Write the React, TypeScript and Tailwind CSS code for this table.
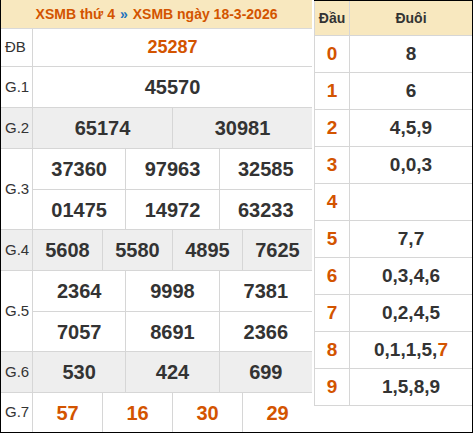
const rows: { label: string; cells: string[][]; gray?: boolean; red?: boolean; h: string; small?: boolean }[] = [
  { label: 'ĐB', cells: [['25287']], h: 'h-[37px]', red: true, small: true },
  { label: 'G.1', cells: [['45570']], h: 'h-[40px]' },
  { label: 'G.2', cells: [['65174', '30981']], h: 'h-[40px]', gray: true },
  { label: 'G.3', cells: [['37360', '97963', '32585'], ['01475', '14972', '63233']], h: 'h-[40px]' },
  { label: 'G.4', cells: [['5608', '5580', '4895', '7625']], h: 'h-[40px]', gray: true },
  { label: 'G.5', cells: [['2364', '9998', '7381'], ['7057', '8691', '2366']], h: 'h-[40px]' },
  { label: 'G.6', cells: [['530', '424', '699']], h: 'h-[40px]', gray: true },
  { label: 'G.7', cells: [['57', '16', '30', '29']], h: 'h-[39px]', red: true },
];

const loto: [string, React.ReactNode][] = [
  ['0', '8'],
  ['1', '6'],
  ['2', '4,5,9'],
  ['3', '0,0,3'],
  ['4', ''],
  ['5', '7,7'],
  ['6', '0,3,4,6'],
  ['7', '0,2,4,5'],
  ['8', <>0,1,1,5,<span className="text-[#d35400]">7</span></>],
  ['9', '1,5,8,9'],
];

export default function App() {
  return (
    <div
      className="flex h-[433px] w-[473px] border-x border-b border-black bg-white text-[#333]"
      style={{ fontFamily: '"Liberation Sans", Arial, sans-serif' }}
    >
      <div className="flex w-[311px] flex-col">
        <div className="flex h-[36px] items-center justify-center border-b border-[#d9d9d9] bg-[#f8e8bf] text-[14px] font-bold text-[#d35400]">
          XSMB thứ 4 <span className="mx-[5px] text-[#1e73be]">»</span> XSMB ngày 18-3-2026
        </div>
        {rows.map((r) => (
          <div key={r.label} className={`flex border-b border-[#d6d6d6] last:border-b-0 ${r.gray ? 'bg-[#eeeeee]' : ''}`}>
            <div className="flex w-[32px] shrink-0 items-center border-r border-[#d6d6d6] pl-[4px] text-[15px]">
              {r.label}
            </div>
            <div className="flex flex-1 flex-col">
              {r.cells.map((line, i) => (
                <div key={i} className={`flex ${r.h} ${i > 0 ? 'border-t border-[#d6d6d6]' : ''}`}>
                  {line.map((n, j) => (
                    <div
                      key={j}
                      className={`flex flex-1 items-center justify-center font-bold ${j > 0 ? 'border-l border-[#d6d6d6]' : ''} ${r.small ? 'text-[18px]' : 'text-[20px]'} ${r.red ? 'text-[#d35400]' : ''}`}
                    >
                      {n}
                    </div>
                  ))}
                </div>
              ))}
            </div>
          </div>
        ))}
      </div>
      <div className="ml-[2px] flex flex-1 flex-col self-start border-t border-black">
        <div className="flex h-[35px] border-b border-l border-[#d6d6d6] bg-[#f8e8bf] text-[14px] font-bold">
          <div className="flex w-[35px] items-center justify-center border-r border-[#d6d6d6]">Đầu</div>
          <div className="flex flex-1 items-center justify-center">Đuôi</div>
        </div>
        {loto.map(([d, v]) => (
          <div key={d} className="flex h-[37px] border-b border-l border-[#d6d6d6] text-[19px] font-bold">
            <div className="flex w-[35px] items-center justify-center border-r border-[#d6d6d6] text-[#d35400]">{d}</div>
            <div className="flex flex-1 items-center justify-center">{v}</div>
          </div>
        ))}
      </div>
    </div>
  );
}
